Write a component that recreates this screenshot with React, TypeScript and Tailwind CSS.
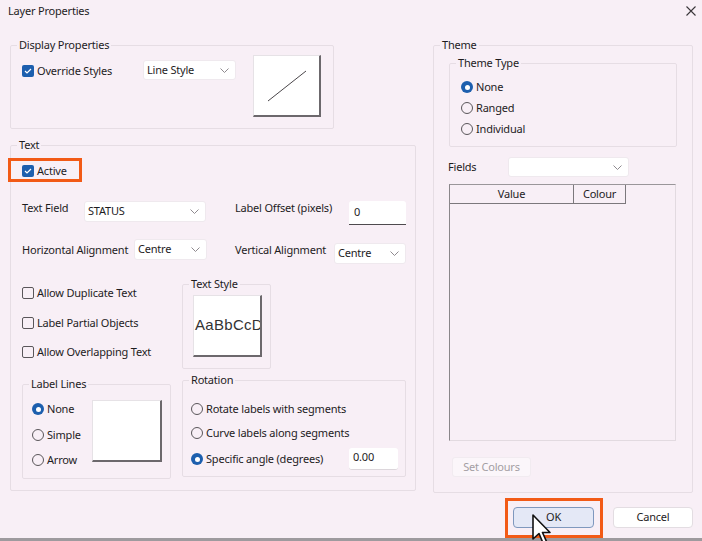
import React from "react";

type Kids = { children?: React.ReactNode };

const Chevron = () => (
  <svg width="9" height="5" viewBox="0 0 9 5" className="shrink-0">
    <path d="M0.5 0.5 L4.5 4.5 L8.5 0.5" fill="none" stroke="#8f8a8f" strokeWidth="1" />
  </svg>
);

function Checkbox({ checked }: { checked?: boolean }) {
  if (checked) {
    return (
      <span className="w-[12px] h-[12px] rounded-[2px] bg-[#1d5fae] flex items-center justify-center shrink-0">
        <svg width="8" height="6" viewBox="0 0 8 6">
          <path d="M1 3 L3 5 L7 1" fill="none" stroke="white" strokeWidth="1.2" />
        </svg>
      </span>
    );
  }
  return <span className="w-[12px] h-[12px] rounded-[2px] border border-[#5a565a] shrink-0" />;
}

function Radio({ checked }: { checked?: boolean }) {
  if (checked) {
    return (
      <span className="w-[12px] h-[12px] rounded-full bg-[#1d5fae] flex items-center justify-center shrink-0">
        <span className="w-[5px] h-[5px] rounded-full bg-white" />
      </span>
    );
  }
  return <span className="w-[12px] h-[12px] rounded-full border border-[#5a565a] shrink-0" />;
}

function Select({ value, className }: { value?: string; className: string }) {
  return (
    <div className={`bg-white border border-[#efe9ee] rounded-[3px] flex items-center justify-between pl-[3px] pr-[6px] ${className}`}>
      <span>{value}</span>
      <Chevron />
    </div>
  );
}

function Group({ title, className, children }: Kids & { title: string; className: string }) {
  return (
    <fieldset className={`border border-[#e6dde4] rounded-[2px] shrink-0 ${className}`}>
      <legend className="ml-[6px] px-[2px] leading-[16px]">{title}</legend>
      {children}
    </fieldset>
  );
}

function Option({ label, checked, radio, className }: { label: string; checked?: boolean; radio?: boolean; className: string }) {
  return (
    <div className={`h-[14px] flex items-center gap-[3px] ${className}`}>
      {radio ? <Radio checked={checked} /> : <Checkbox checked={checked} />}
      <span className="leading-[14px] whitespace-nowrap">{label}</span>
    </div>
  );
}

// white swatch with the dark drop edge on right and bottom
function Swatch({ className, children }: Kids & { className: string }) {
  return (
    <div className={`bg-white border-t border-l border-[#e6e2e6] border-r-2 border-b-2 border-r-[#6c686c] border-b-[#6c686c] ${className}`}>
      {children}
    </div>
  );
}

export default function App() {
  return (
    <div className="relative w-[702px] h-[541px] bg-[#f8eff6] text-[11px] tracking-[-0.2px] text-[#1e1c1e] font-['Noto_Sans',sans-serif] flex flex-col overflow-hidden">
      <div className="h-[22px] shrink-0 flex items-center justify-between pl-[8px] pr-[6px]">
        <span>Layer Properties</span>
        <svg width="10" height="10" viewBox="0 0 10 10">
          <path d="M0.5 0.5 L9.5 9.5 M9.5 0.5 L0.5 9.5" stroke="#3a363a" strokeWidth="1.1" />
        </svg>
      </div>

      <div className="flex pl-[10px] pt-[15px]">
        {/* left column */}
        <div className="w-[406px] flex flex-col">
          <Group title="Display Properties" className="w-[324px] h-[92px]">
            <div className="flex items-start">
              <Option label="Override Styles" checked className="ml-[11px] mt-[11px] w-[121px]" />
              <Select value="Line Style" className="mt-[7px] w-[93px] h-[20px]" />
              <Swatch className="ml-[17px] mt-[2px] w-[68px] h-[62px] flex items-center justify-center">
                <svg width="44" height="36" viewBox="0 0 44 36">
                  <path d="M3 33 L41 3" stroke="#4a464a" strokeWidth="1" />
                </svg>
              </Swatch>
            </div>
          </Group>

          <Group title="Text" className="mt-[8px] w-[406px] h-[354px]">
            <div className="relative w-fit ml-[11px] mt-[11px]">
              <Option label="Active" checked className="" />
              <div className="absolute -left-[14px] -top-[6px] w-[74px] h-[24px] border-[3px] border-[#f25a16]" />
            </div>

            <div className="flex items-start mt-[23px] ml-[11px]">
              <span className="w-[62px] leading-[14px]">Text Field</span>
              <Select value="STATUS" className="w-[122px] h-[21px]" />
              <span className="ml-[29px] w-[114px] leading-[14px]">Label Offset (pixels)</span>
              <div className="w-[57px] h-[24px] bg-white border-b border-[#4e4a4e] rounded-t-[3px] pl-[5px] flex items-center">0</div>
            </div>

            <div className="flex items-start mt-[14px] ml-[11px]">
              <span className="mt-[4px] w-[112px] leading-[14px]">Horizontal Alignment</span>
              <Select value="Centre" className="w-[73px] h-[21px]" />
              <span className="mt-[4px] ml-[28px] w-[99px] leading-[14px]">Vertical Alignment</span>
              <Select value="Centre" className="mt-[4px] w-[72px] h-[21px]" />
            </div>

            <div className="flex items-start mt-[12px] ml-[11px]">
              <div className="w-[160px] flex flex-col">
                <Option label="Allow Duplicate Text" className="mt-[10px]" />
                <Option label="Label Partial Objects" className="mt-[16px]" />
                <Option label="Allow Overlapping Text" className="mt-[15px]" />
              </div>
              <Group title="Text Style" className="w-[89px] h-[93px]">
                <Swatch className="ml-[10px] mt-[3px] w-[69px] h-[62px] overflow-hidden flex items-center pl-[1px]">
                  <span className="font-['Liberation_Sans',sans-serif] text-[15px] tracking-[0.3px] whitespace-nowrap text-[#333]">AaBbCcD</span>
                </Swatch>
              </Group>
            </div>

            <div className="flex items-start mt-[3px] ml-[11px]">
              <Group title="Label Lines" className="mt-[4px] w-[149px] h-[103px]">
                <div className="flex items-start">
                  <div className="ml-[9px] w-[60px] flex flex-col">
                    <Option label="None" radio checked className="mt-[10px]" />
                    <Option label="Simple" radio className="mt-[12px]" />
                    <Option label="Arrow" radio className="mt-[11px]" />
                  </div>
                  <Swatch className="mt-[8px] w-[70px] h-[62px]" />
                </div>
              </Group>
              <Group title="Rotation" className="ml-[11px] w-[224px] h-[105px]">
                <div className="ml-[8px] flex flex-col">
                  <Option label="Rotate labels with segments" radio className="mt-[14px]" />
                  <Option label="Curve labels along segments" radio className="mt-[10px]" />
                  <div className="flex items-center h-[14px] mt-[12px]">
                    <Option label="Specific angle (degrees)" radio checked className="w-[158px]" />
                    <div className="w-[49px] h-[22px] shrink-0 bg-white border-b border-[#dcd6db] rounded-[3px] pl-[4px] pt-[2px] leading-[14px]">0.00</div>
                  </div>
                </div>
              </Group>
            </div>
          </Group>
        </div>

        {/* right column */}
        <Group title="Theme" className="ml-[17px] w-[260px] h-[456px]">
          <Group title="Theme Type" className="ml-[15px] mt-[2px] w-[228px] h-[92px]">
            <div className="ml-[11px] flex flex-col">
              <Option label="None" radio checked className="mt-[9px]" />
              <Option label="Ranged" radio className="mt-[7px]" />
              <Option label="Individual" radio className="mt-[7px]" />
            </div>
          </Group>

          <div className="flex items-start mt-[10px] ml-[14px]">
            <span className="mt-[3px] w-[60px] leading-[14px]">Fields</span>
            <Select className="w-[121px] h-[20px]" />
          </div>

          <div className="ml-[15px] mt-[7px] w-[227px] h-[257px] border-l border-t border-l-[#8a868a] border-t-[#9a969a] border-r border-b border-r-[#e2dae0] border-b-[#e2dae0]">
            <div className="flex">
              <div className="w-[124px] h-[19px] border-r border-b border-[#7c787c] flex items-center justify-center">Value</div>
              <div className="w-[52px] h-[19px] border-r border-b border-[#7c787c] flex items-center justify-center">Colour</div>
            </div>
          </div>

          <div className="ml-[18px] mt-[16px] w-[79px] h-[20px] rounded-[3px] bg-[#fbf6fa] border border-[#f1ebf0] text-[#a39ea3] flex items-center justify-center">
            Set Colours
          </div>
        </Group>
      </div>

      <div className="flex justify-end gap-[19px] pr-[9px] mt-[14px]">
        <div className="relative w-[81px] h-[21px] rounded-[4px] border border-[#7f98be] bg-[#e4e8f6] flex items-center justify-center">
          OK
          <div className="absolute -left-[9px] -top-[10px] w-[98px] h-[40px] border-[3px] border-[#f25a16]" />
        </div>
        <div className="w-[80px] h-[21px] rounded-[4px] border border-[#e3dde2] bg-white flex items-center justify-center">
          Cancel
        </div>
      </div>

      <div className="mt-auto h-[3px] shrink-0 bg-[#9e9a9e]" />

      {/* mouse pointer over OK */}
      <svg className="absolute left-[532px] top-[514px]" width="22" height="32" viewBox="0 0 22 32">
        <path d="M1 1 L1 25 L7 19.5 L11 29 L14.5 27.5 L10.5 18.5 L18 18.5 Z" fill="white" stroke="#111" strokeWidth="1.6" strokeLinejoin="round" />
      </svg>
    </div>
  );
}
